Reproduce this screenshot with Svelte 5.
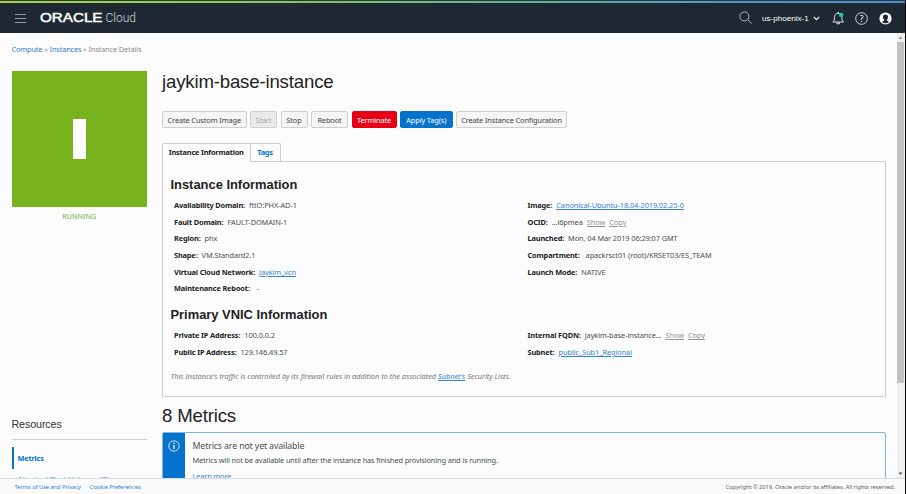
<script>
  const actions = [
    { label: 'Create Custom Image', w: 84.5 },
    { label: 'Start', kind: 'disabled', w: 27 },
    { label: 'Stop', w: 27 },
    { label: 'Reboot', w: 37 },
    { label: 'Terminate', kind: 'danger', w: 45 },
    { label: 'Apply Tag(s)', kind: 'primary', w: 52.5 },
    { label: 'Create Instance Configuration', w: 111 }
  ];
  const info = [
    [
      { k: 'Availability Domain:', v: 'fttO:PHX-AD-1' },
      { k: 'Fault Domain:', v: 'FAULT-DOMAIN-1' },
      { k: 'Region:', v: 'phx' },
      { k: 'Shape:', v: 'VM.Standard2.1' },
      { k: 'Virtual Cloud Network:', v: 'jaykim_vcn', link: true },
      { k: 'Maintenance Reboot:', v: '-', gap: 7 }
    ],
    [
      { k: 'Image:', v: 'Canonical-Ubuntu-18.04-2019.02.25-0', link: true },
      { k: 'OCID:', v: '...i6pmea', tools: true },
      { k: 'Launched:', v: 'Mon, 04 Mar 2019 06:29:07 GMT' },
      { k: 'Compartment:', v: 'apackrsct01 (root)/KRSET03/ES_TEAM', gap: 6 },
      { k: 'Launch Mode:', v: 'NATIVE' }
    ]
  ];
  const vnic = [
    [
      { k: 'Private IP Address:', v: '100.0.0.2' },
      { k: 'Public IP Address:', v: '129.146.49.57' }
    ],
    [
      { k: 'Internal FQDN:', v: 'jaykim-base-instance...', tools: true },
      { k: 'Subnet:', v: 'public_Sub1_Regional', link: true }
    ]
  ];
</script>

{#snippet details(columns)}
  <div class="details">
    {#each columns as col}
      <dl>
        {#each col as f}
          <div class="field">
            <dt>{f.k}</dt>
            <dd style:margin-left="{f.gap ?? 4}px">
              {#if f.link}<span class="link">{f.v}</span>{:else}{f.v}{/if}
            </dd>
            {#if f.tools}<span class="tool">Show</span><span class="tool">Copy</span>{/if}
          </div>
        {/each}
      </dl>
    {/each}
  </div>
{/snippet}

<div class="app">
  <div class="window">
    <div class="strip"></div>
    <header>
      <svg class="burger" width="11" height="10" viewBox="0 0 11 10"><path d="M0 1.500h11M0 5.500h11M0 9.500h11" stroke="#8f969c" stroke-width="1" /></svg>
      <svg class="brand" width="98" height="14" viewBox="0 0 98 14">
        <text class="oracle" x="0" y="11.200" textLength="62.500" lengthAdjust="spacingAndGlyphs">ORACLE</text>
        <text class="cloud" x="65.500" y="11.200" textLength="30.500" lengthAdjust="spacingAndGlyphs">Cloud</text>
      </svg>
      <svg class="search" width="14" height="14" viewBox="0 0 14 14" fill="none" stroke="#c3c8cb" stroke-width="0.9"><circle cx="5.4" cy="5.4" r="4.5" /><path d="M8.7 8.7l4 3.9" /></svg>
      <span class="region">us-phoenix-1</span>
      <svg class="chev" width="7" height="5" viewBox="0 0 7 5" fill="none" stroke="#fff" stroke-width="1.1"><path d="M.7.8l2.8 2.8L6.300.8" /></svg>
      <svg class="bell" width="13" height="14" viewBox="0 0 13 14" fill="none" stroke="#dfe2e4" stroke-width="1"><path d="M.8 11h10.800c-1.300-1.100-1.700-2.200-1.700-4.500 0-2.600-1.300-4.100-3.700-4.100s-3.700 1.500-3.700 4.100c0 2.300-.4 3.400-1.700 4.500zM5 11v1.800h2.400v-1.800M6.200 2.300V.7" /><circle cx="9.200" cy="3.900" r="2.200" fill="#1fc6a0" stroke="none" /></svg>
      <svg class="help" width="13" height="13" viewBox="0 0 13 13"><circle cx="6.500" cy="6.500" r="5.800" fill="none" stroke="#e3e5e7" stroke-width="0.900" /><text x="6.500" y="9.600" text-anchor="middle">?</text></svg>
      <svg class="user" width="13" height="13" viewBox="0 0 13 13"><circle cx="6.500" cy="6.500" r="6.100" fill="#fff" /><path d="M6.500 2.500c-1.700 0-2.600 1.100-2.600 2.600 0 1.200.5 2.100 1.200 2.700v.8l-2 1.100c.8 1 2 1.500 3.400 1.500s2.600-.5 3.400-1.500l-2-1.100v-.8c.7-.6 1.200-1.500 1.200-2.700 0-1.500-.9-2.600-2.600-2.600z" fill="#1e2832" /></svg>
    </header>

    <div class="body">
      <main>
        <nav class="crumbs"><span>Compute</span> » <span>Instances</span> » Instance Details</nav>
        <div class="columns">
          <aside>
            <div class="state"><i></i></div>
            <div class="status">RUNNING</div>
            <h3>Resources</h3>
            <div class="res active">Metrics</div>
            <div class="res">Attached Block Volumes (0)</div>
          </aside>
          <section>
            <h1>jaykim-base-instance</h1>
            <div class="actions">
              {#each actions as a}<button class={a.kind} style:width="{a.w}px">{a.label}</button>{/each}
            </div>
            <div class="tabs"><div class="tab on">Instance Information</div><div class="tab">Tags</div></div>
            <div class="panel">
              <h2>Instance Information</h2>
              {@render details(info)}
              <h2 class="second">Primary VNIC Information</h2>
              {@render details(vnic)}
              <p class="note">This Instance's traffic is controlled by its firewall rules in addition to the associated <span class="link">Subnet's</span> Security Lists.</p>
            </div>
            <h1 class="metrics">8 Metrics</h1>
            <div class="notice">
              <div class="mark"><svg width="12" height="12" viewBox="0 0 12 12"><circle cx="6" cy="6" r="5.200" fill="none" stroke="#fff" stroke-width="0.800" /><path d="M6 5v4M6 2.800v1.300" stroke="#fff" stroke-width="1.300" /></svg></div>
              <div class="msg">
                <div class="head">Metrics are not yet available</div>
                <div class="sub">Metrics will not be available until after the instance has finished provisioning and is running.</div>
                <div class="more">Learn more</div>
              </div>
            </div>
          </section>
        </div>
      </main>
      <div class="scroll">
        <svg width="7" height="9" viewBox="0 0 7 9"><path d="M1.500 6h4L3.500 3.800z" fill="#888" /></svg>
        <div class="thumb"></div>
        <svg class="down" width="7" height="8" viewBox="0 0 7 8"><path d="M1.500 2.500h4L3.500 4.800z" fill="#444" /></svg>
      </div>
    </div>
    <footer><span class="terms">Terms of Use and Privacy</span><span class="cookie">Cookie Preferences</span><span class="copy">Copyright © 2019, Oracle and/or its affiliates. All rights reserved.</span></footer>
  </div>
</div>

<style>
  :global(body) { background: #000; }
  .app { width: 906px; height: 494px; overflow: hidden; background: #000; font: 7.4px/10px 'Noto Sans', 'Open Sans', sans-serif; color: #4c4f52; white-space: nowrap; }
  .app * { box-sizing: border-box; }
  .window { width: 904.5px; height: 494px; background: #fcfcfc; display: flex; flex-direction: column; }
  .strip { height: 3px; flex: none; background: linear-gradient(#2a3a2c 0 1px, transparent 1px), linear-gradient(90deg, #a8d54a, #8ac566 30%, #62b0a0 58%, #4a94d8 85%, #4a8edb); }
  header { height: 30px; flex: none; background: #1e2832; display: flex; align-items: center; padding-left: 15px; }
  .brand { margin-left: 14px; }
  .oracle { font: 12px 'Liberation Sans', sans-serif; fill: #fff; stroke: #fff; stroke-width: 0.450px; }
  .cloud { font: 300 12.300px Roboto, 'Liberation Sans', sans-serif; fill: #d3d7da; }
  .search { margin-left: 601px; }
  .region { color: #fff; font: 8.100px 'Liberation Sans', sans-serif; margin-left: 9px; width: 47px; }
  .chev { margin-left: 4px; }
  .bell { margin-left: 12px; }
  .help { margin-left: 10px; }
  .help text { font: 8.500px 'Noto Sans', sans-serif; fill: #fff; }
  .user { margin-left: 10.500px; }
  .body { height: 445px; flex: none; display: flex; overflow: hidden; }
  main { width: 896.500px; padding-left: 11.500px; overflow: hidden; }
  .crumbs { height: 38px; padding-top: 11px; color: #8a8d90; letter-spacing: -0.160px; }
  .crumbs span { color: #3582d4; }
  .columns { display: flex; gap: 15px; }
  aside { width: 135.500px; }
  .state { height: 135.500px; background: #77b31c; display: flex; align-items: center; justify-content: center; }
  .state i { width: 13px; height: 40px; background: #fff; }
  .status { text-align: center; color: #77b543; margin-top: 4px; font-size: 7.200px; }
  h1, h2, h3, dl, dd, p { margin: 0; font-weight: normal; }
  h3 { font: 10.700px/14px 'Liberation Sans', sans-serif; letter-spacing: -0.100px; color: #333; margin-top: 196px; height: 23px; border-bottom: 1px solid #cfd0d1; }
  .res { color: #3582d4; height: 20px; line-height: 20px; padding-left: 6px; letter-spacing: -0.120px; }
  .active { color: #0572ce; font-weight: bold; margin-top: 7px; border-left: 2px solid #0572ce; padding-left: 4px; height: 22px; line-height: 22px; letter-spacing: -0.200px; }
  section { width: 724px; }
  h1 { font: 18.600px/22px 'Liberation Sans', sans-serif; letter-spacing: -0.160px; color: #222; }
  .actions { display: flex; gap: 3.500px; margin-top: 18px; }
  button { height: 17px; padding: 0; border: 1px solid #cecfd0; border-radius: 2px; background: #f5f5f5; color: #444; font: inherit; letter-spacing: -0.120px; }
  .disabled { background: #eaeaea; color: #aaa; }
  .danger { background: #e60018; border-color: #e60018; color: #fff; }
  .primary { background: #0572ce; border-color: #0572ce; color: #fff; }
  .tabs { display: flex; margin-top: 15px; height: 18px; }
  .tab { height: 18px; border: 1px solid #cdcecf; border-bottom: 0; border-left: 0; border-radius: 0 2px 0 0; width: 30px; text-align: center; line-height: 17px; color: #0572ce; font-weight: bold; letter-spacing: -0.200px; }
  .on { width: 88.500px; height: 19px; border-left: 1px solid #c8cacb; border-radius: 2px 0 0; background: #fcfcfc; color: #222; position: relative; }
  .panel { height: 236px; border: 1px solid #cdcecf; border-radius: 0 0 2px 2px; padding: 15px 0 0 7.500px; }
  h2 { font: bold 12.900px/15px 'Liberation Sans', sans-serif; color: #222; }
  .second { margin-top: 10.500px; }
  .details { display: flex; padding-left: 3.500px; margin-top: 5px; }
  dl { width: 353.500px; }
  .field { display: flex; height: 16.650px; line-height: 16.650px; letter-spacing: -0.090px; }
  dt { color: #222; font-weight: bold; letter-spacing: -0.150px; }
  .link { color: #3582d4; text-decoration: underline; }
  .tool { margin-left: 4px; color: #929496; text-decoration: underline; }
  .note { font-style: italic; color: #77797b; margin-top: 10.500px; letter-spacing: -0.030px; }
  .metrics { margin-top: 8px; }
  .notice { margin-top: 5px; height: 80px; border: 1px solid #7db5e6; border-radius: 2px; display: flex; }
  .mark { width: 22px; background: #0572ce; padding: 7px 0 0 5px; }
  .msg { padding: 7px 0 0 7.500px; letter-spacing: -0.145px; }
  .head { font-size: 8.800px; line-height: 12px; }
  .sub { margin-top: 2.500px; }
  .more { margin-top: 6px; color: #3582d4; }
  .scroll { width: 8px; background: #f0f0f0; display: flex; flex-direction: column; align-items: center; }
  .thumb { width: 7px; height: 341px; background: #c1c1c1; flex: none; }
  .scroll svg { flex: none; }
  .scroll .down { margin-top: auto; }
  footer { flex: 1; border-top: 1px solid #d3dce3; background: #fafafa; display: flex; align-items: center; padding: 1px 9.500px 0 14.500px; font-size: 5.800px; letter-spacing: -0.080px; color: #666; position: relative; }
  .terms, .cookie { color: #3582d4; }
  .cookie { margin-left: 9px; }
  .copy { margin-left: auto; }
</style>
